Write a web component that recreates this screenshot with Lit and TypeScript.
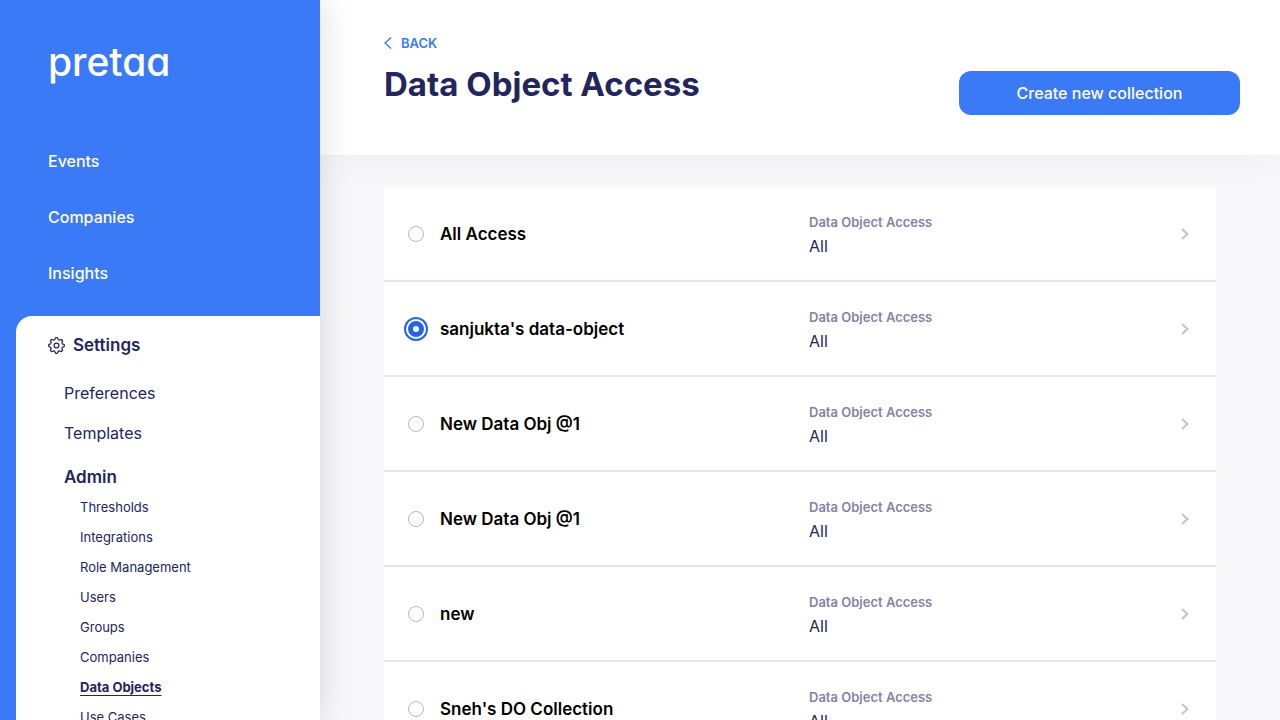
import { LitElement, html, css, svg } from "lit";
import { customElement, state } from "lit/decorators.js";
import { classMap } from "lit/directives/class-map.js";

interface Collection {
  name: string;
  access: string;
}

const MAIN_LINKS = ["Events", "Companies", "Insights"];
const SETTINGS_LINKS = ["Preferences", "Templates"];
const ADMIN_LINKS = [
  "Thresholds",
  "Integrations",
  "Role Management",
  "Users",
  "Groups",
  "Companies",
  "Data Objects",
  "Use Cases",
];

// Outline of an eight-lobed cog centred in a 24 unit box.
function cogPath(): string {
  const points: string[] = [];
  const steps = 96;
  for (let i = 0; i < steps; i++) {
    const angle = (i / steps) * Math.PI * 2;
    const wave = Math.tanh(2.2 * Math.cos(8 * angle));
    const radius = 9.8 + 1.3 * wave;
    points.push(
      `${(12 + radius * Math.sin(angle)).toFixed(2)} ${(12 - radius * Math.cos(angle)).toFixed(2)}`
    );
  }
  return `M${points.join("L")}Z`;
}

const COG = cogPath();

@customElement("side-nav")
export class SideNav extends LitElement {
  static styles = css`
    :host {
      display: flex;
      flex-direction: column;
      box-sizing: border-box;
      padding-left: 16px;
      background: #3a7af7;
      color: #fff;
      overflow: hidden;
    }
    a {
      color: inherit;
      text-decoration: none;
    }
    .brand {
      padding: 34px 32px 0;
      font-size: 39px;
      line-height: 56px;
      font-weight: 500;
      font-feature-settings: "cv11";
    }
    .main {
      display: flex;
      flex-direction: column;
      gap: 32px;
      padding: 59px 32px 31px;
      font-size: 16px;
      line-height: 24px;
      font-weight: 500;
    }
    .settings {
      flex: 1;
      padding: 17px 32px 0;
      background: #fff;
      color: #22265d;
      border-top-left-radius: 16px;
      font-size: 16px;
      line-height: 24px;
    }
    .heading {
      display: flex;
      align-items: center;
      gap: 8px;
      font-size: 17px;
      font-weight: 600;
    }
    .cog {
      width: 17px;
      height: 17px;
      fill: none;
      stroke: currentColor;
      stroke-width: 1.7;
    }
    .group {
      display: flex;
      flex-direction: column;
      gap: 16px;
      padding: 24px 16px 0;
    }
    .admin {
      padding: 20px 16px 0;
      font-size: 17px;
      font-weight: 600;
    }
    .sub {
      display: flex;
      flex-direction: column;
      gap: 10px;
      padding: 8px 32px 0;
      font-size: 13px;
      line-height: 20px;
    }
    .current {
      font-weight: 700;
      text-decoration: underline;
      text-underline-offset: 3px;
    }
  `;

  render() {
    return html`
      <a class="brand" href="#">pretaa</a>
      <nav class="main">
        ${MAIN_LINKS.map((label) => html`<a href="#">${label}</a>`)}
      </nav>
      <nav class="settings">
        <a class="heading" href="#">
          <svg class="cog" viewBox="0 0 24 24" aria-hidden="true">
            ${svg`<path d=${COG} /><circle cx="12" cy="12" r="3.4" />`}
          </svg>
          Settings
        </a>
        <div class="group">
          ${SETTINGS_LINKS.map((label) => html`<a href="#">${label}</a>`)}
        </div>
        <div class="admin">Admin</div>
        <div class="sub">
          ${ADMIN_LINKS.map(
            (label) =>
              html`<a href="#" class=${classMap({ current: label === "Data Objects" })}
                ><span>${label}</span></a
              >`
          )}
        </div>
      </nav>
    `;
  }
}

@customElement("app-root")
export class AppRoot extends LitElement {
  static styles = css`
    :host {
      display: grid;
      grid-template-columns: 320px minmax(0, 1fr);
      height: 100vh;
      overflow: hidden;
      font-family: Inter, "Liberation Sans", sans-serif;
      color: #22265d;
      background: #f8f8fa;
    }
    .side {
      box-shadow: 0 0 32px rgba(0, 0, 0, 0.15);
      z-index: 1;
    }
    .page {
      display: flex;
      flex-direction: column;
      min-height: 0;
    }
    .header {
      display: flex;
      justify-content: space-between;
      align-items: flex-end;
      padding: 32px 40px 40px 64px;
      background: #fff;
      box-shadow: 0 0 40px rgba(0, 0, 0, 0.05);
    }
    .back {
      display: flex;
      align-items: center;
      gap: 8px;
      color: #3a7af7;
      font-size: 13px;
      line-height: 22px;
      font-weight: 600;
      text-decoration: none;
    }
    .back svg {
      width: 9px;
      height: 12px;
      fill: none;
      stroke: currentColor;
      stroke-width: 1.4;
    }
    h1 {
      margin: 8px 0 9px;
      font-size: 33px;
      line-height: 44px;
      font-weight: 700;
    }
    .create {
      flex: 0 1 281px;
      height: 44px;
      border: 0;
      border-radius: 12px;
      background: #3a7af7;
      color: #fff;
      font: inherit;
      font-size: 16px;
      font-weight: 500;
    }
    .list {
      flex: 1;
      min-height: 0;
      overflow: hidden;
      margin: 0;
      padding: 32px 64px 0;
      list-style: none;
    }
    .row {
      display: grid;
      grid-template-columns: 16px minmax(0, 353fr) minmax(0, 352fr) 16px;
      column-gap: 16px;
      align-items: center;
      padding: 23px 23px 22px 24px;
      background: #fff;
      border-bottom: 2px solid #e4e4ec;
    }
    .row input {
      appearance: none;
      width: 16px;
      height: 16px;
      margin: 0;
      border: 1px solid #b8b6cc;
      border-radius: 50%;
      background: #fff;
    }
    .row input:checked {
      border: 5px solid #2563eb;
      box-shadow: 0 0 0 2px #fff, 0 0 0 4px #2563eb;
    }
    .name {
      color: #000;
      font-size: 17px;
      line-height: 24px;
      font-weight: 600;
    }
    .caption {
      color: #8583a3;
      font-size: 13px;
      line-height: 24px;
      font-weight: 600;
    }
    .value {
      font-size: 16px;
      line-height: 24px;
    }
    .open {
      display: flex;
      justify-content: center;
    }
    .open svg {
      width: 8px;
      height: 12px;
      fill: none;
      stroke: #c3c1d8;
      stroke-width: 2;
    }
  `;

  @state() private selected = 1;

  private collections: Collection[] = [
    { name: "All Access", access: "All" },
    { name: "sanjukta's data-object", access: "All" },
    { name: "New Data Obj @1", access: "All" },
    { name: "New Data Obj @1", access: "All" },
    { name: "new", access: "All" },
    { name: "Sneh's DO Collection", access: "All" },
  ];

  render() {
    return html`
      <side-nav class="side"></side-nav>
      <main class="page">
        <header class="header">
          <div>
            <a class="back" href="#">
              <svg viewBox="0 0 9 12" aria-hidden="true"><path d="M7 .6 1 6l6 5.4" /></svg>
              BACK
            </a>
            <h1>Data Object Access</h1>
          </div>
          <button class="create" type="button">Create new collection</button>
        </header>
        <ul class="list">
          ${this.collections.map(
            (item, i) => html`
              <li class="row">
                <input
                  type="radio"
                  name="collection"
                  id="collection-${i}"
                  .checked=${i === this.selected}
                  @change=${() => (this.selected = i)}
                />
                <label class="name" for="collection-${i}">${item.name}</label>
                <div>
                  <div class="caption">Data Object Access</div>
                  <div class="value">${item.access}</div>
                </div>
                <a class="open" href="#" aria-label="Open ${item.name}">
                  <svg viewBox="0 0 8 12"><path d="m1 1 5.4 5L1 11" /></svg>
                </a>
              </li>
            `
          )}
        </ul>
      </main>
    `;
  }
}
